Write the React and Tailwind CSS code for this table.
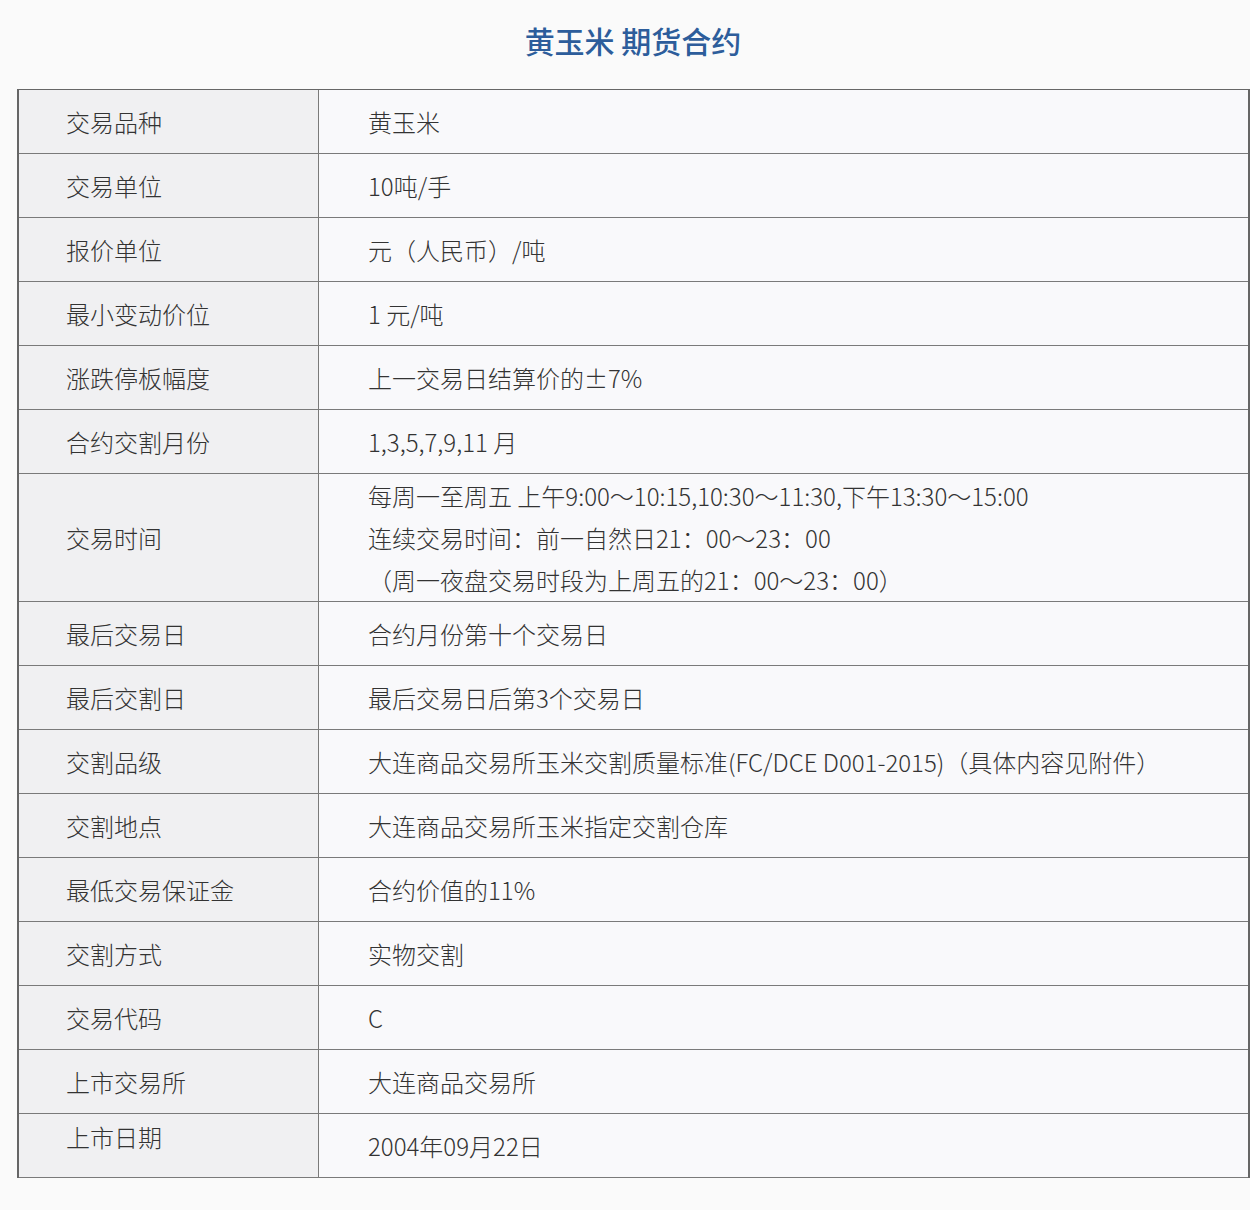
const rows = [
  { label: '交易品种', value: ['黄玉米'] },
  { label: '交易单位', value: ['10吨/手'] },
  { label: '报价单位', value: ['元（人民币）/吨'] },
  { label: '最小变动价位', value: ['1 元/吨'] },
  { label: '涨跌停板幅度', value: ['上一交易日结算价的±7%'] },
  { label: '合约交割月份', value: ['1,3,5,7,9,11 月'] },
  {
    label: '交易时间',
    value: [
      '每周一至周五 上午9:00～10:15,10:30～11:30,下午13:30～15:00',
      '连续交易时间：前一自然日21：00～23：00',
      '（周一夜盘交易时段为上周五的21：00～23：00）',
    ],
  },
  { label: '最后交易日', value: ['合约月份第十个交易日'] },
  { label: '最后交割日', value: ['最后交易日后第3个交易日'] },
  { label: '交割品级', value: ['大连商品交易所玉米交割质量标准(FC/DCE D001-2015)（具体内容见附件）'] },
  { label: '交割地点', value: ['大连商品交易所玉米指定交割仓库'] },
  { label: '最低交易保证金', value: ['合约价值的11%'] },
  { label: '交割方式', value: ['实物交割'] },
  { label: '交易代码', value: ['C'] },
  { label: '上市交易所', value: ['大连商品交易所'] },
  { label: '上市日期', value: ['2004年09月22日'], lastRow: true },
]

export default function App() {
  return (
    <div
      className="min-h-[1210px] w-[1250px] bg-[#fafafa] pt-[20px] text-[#333333]"
      style={{ fontFamily: '"Noto Sans CJK SC", "Noto Sans", sans-serif' }}
    >
      {/* Title */}
      <h1 className="h-[40px] text-center text-[30px] leading-[40px] font-medium text-[#2d5d9b] pl-[16px]">
        黄玉米 期货合约
      </h1>

      {/* Contract table */}
      <div className="mt-[29px] ml-[17px] w-[1233px] border-t border-l-2 border-r-2 border-[#666666]">
        {rows.map((row) => (
          <div key={row.label} className="flex border-b border-[#7a7a7a]">
            <div
              className={
                row.lastRow
                  ? 'w-[299px] shrink-0 bg-[#f0f0f2] pl-[47px] text-[24px] leading-[46px] font-light'
                  : 'w-[299px] shrink-0 bg-[#f0f0f2] pl-[47px] flex items-center text-[24px] font-light'
              }
            >
              {row.label}
            </div>
            <div
              className={
                row.value.length > 1
                  ? 'flex-1 h-[127px] border-l border-[#7a7a7a] bg-[#f9f9fb] pl-[49px] flex flex-col justify-center text-[24px] leading-[42px] font-light'
                  : 'flex-1 h-[63px] border-l border-[#7a7a7a] bg-[#f9f9fb] pl-[49px] flex items-center text-[24px] font-light'
              }
            >
              {row.value.map((line) => (
                <span key={line}>{line}</span>
              ))}
            </div>
          </div>
        ))}
      </div>
    </div>
  )
}
